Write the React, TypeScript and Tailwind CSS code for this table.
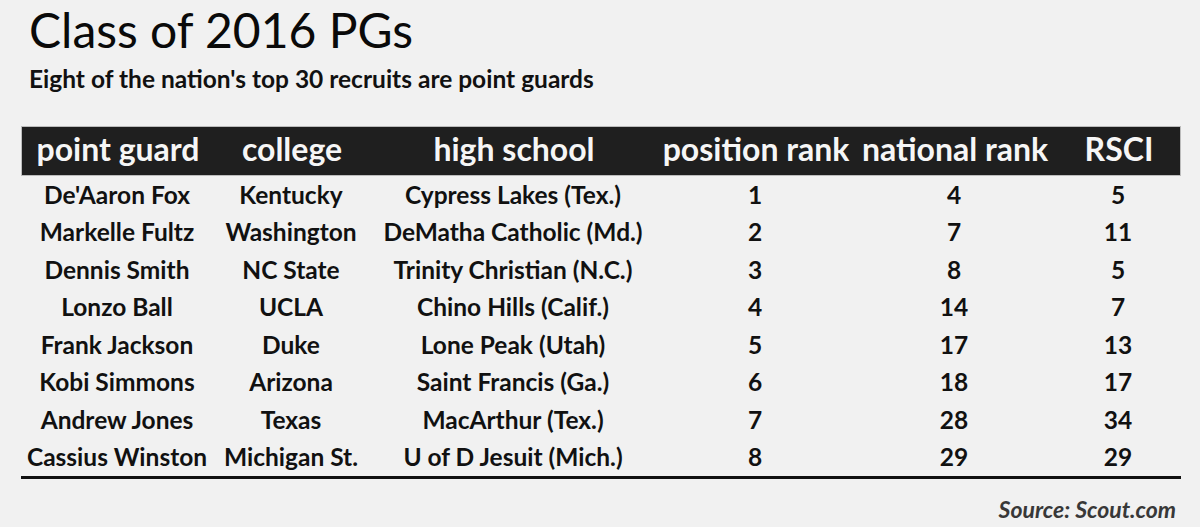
const rows = [
  ["De'Aaron Fox", 'Kentucky', 'Cypress Lakes (Tex.)', '1', '4', '5'],
  ['Markelle Fultz', 'Washington', 'DeMatha Catholic (Md.)', '2', '7', '11'],
  ['Dennis Smith', 'NC State', 'Trinity Christian (N.C.)', '3', '8', '5'],
  ['Lonzo Ball', 'UCLA', 'Chino Hills (Calif.)', '4', '14', '7'],
  ['Frank Jackson', 'Duke', 'Lone Peak (Utah)', '5', '17', '13'],
  ['Kobi Simmons', 'Arizona', 'Saint Francis (Ga.)', '6', '18', '17'],
  ['Andrew Jones', 'Texas', 'MacArthur (Tex.)', '7', '28', '34'],
  ['Cassius Winston', 'Michigan St.', 'U of D Jesuit (Mich.)', '8', '29', '29'],
]

const headers = ['point guard', 'college', 'high school', 'position rank', 'national rank', 'RSCI']

const cols = 'grid grid-cols-[192px_156px_288px_196px_202px_126px]'

export default function App() {
  return (
    <div className="w-[1200px] h-[527px] bg-[#f1f1f1] overflow-hidden font-['Lato',sans-serif] text-[#111]">
      {/* Title */}
      <div className="pl-[29px] pt-[3px]">
        <h1 className="text-[48px] leading-[54px] font-normal text-[#0a0a0a]">Class of 2016 PGs</h1>
        <p className="mt-[8px] text-[24.5px] leading-[28px] font-bold">
          Eight of the nation's top 30 recruits are point guards
        </p>
      </div>

      {/* Table */}
      <div className="mx-[21px] mt-[33px] w-[1160px]">
        <div className={`${cols} h-[50px] items-center bg-[#1f1f1f] border border-[#bcbcbc] text-[#f6f6f6] text-[32px] font-bold`}>
          {headers.map((h) => (
            <div key={h} className="text-center whitespace-nowrap leading-none pb-[5px]">
              {h}
            </div>
          ))}
        </div>
        <div className="border-b-[3px] border-[#111]">
          {rows.map((r) => (
            <div key={r[0]} className={`${cols} h-[37.5px] items-center text-[24.5px] font-bold`}>
              {r.map((c, i) => (
                <div key={i} className="text-center whitespace-nowrap leading-none">
                  {c}
                </div>
              ))}
            </div>
          ))}
        </div>
        <div className="flex justify-end pr-[5px] pt-[19px]">
          <span className="italic font-bold text-[23px] leading-none text-[#383838]">Source: Scout.com</span>
        </div>
      </div>
    </div>
  )
}
